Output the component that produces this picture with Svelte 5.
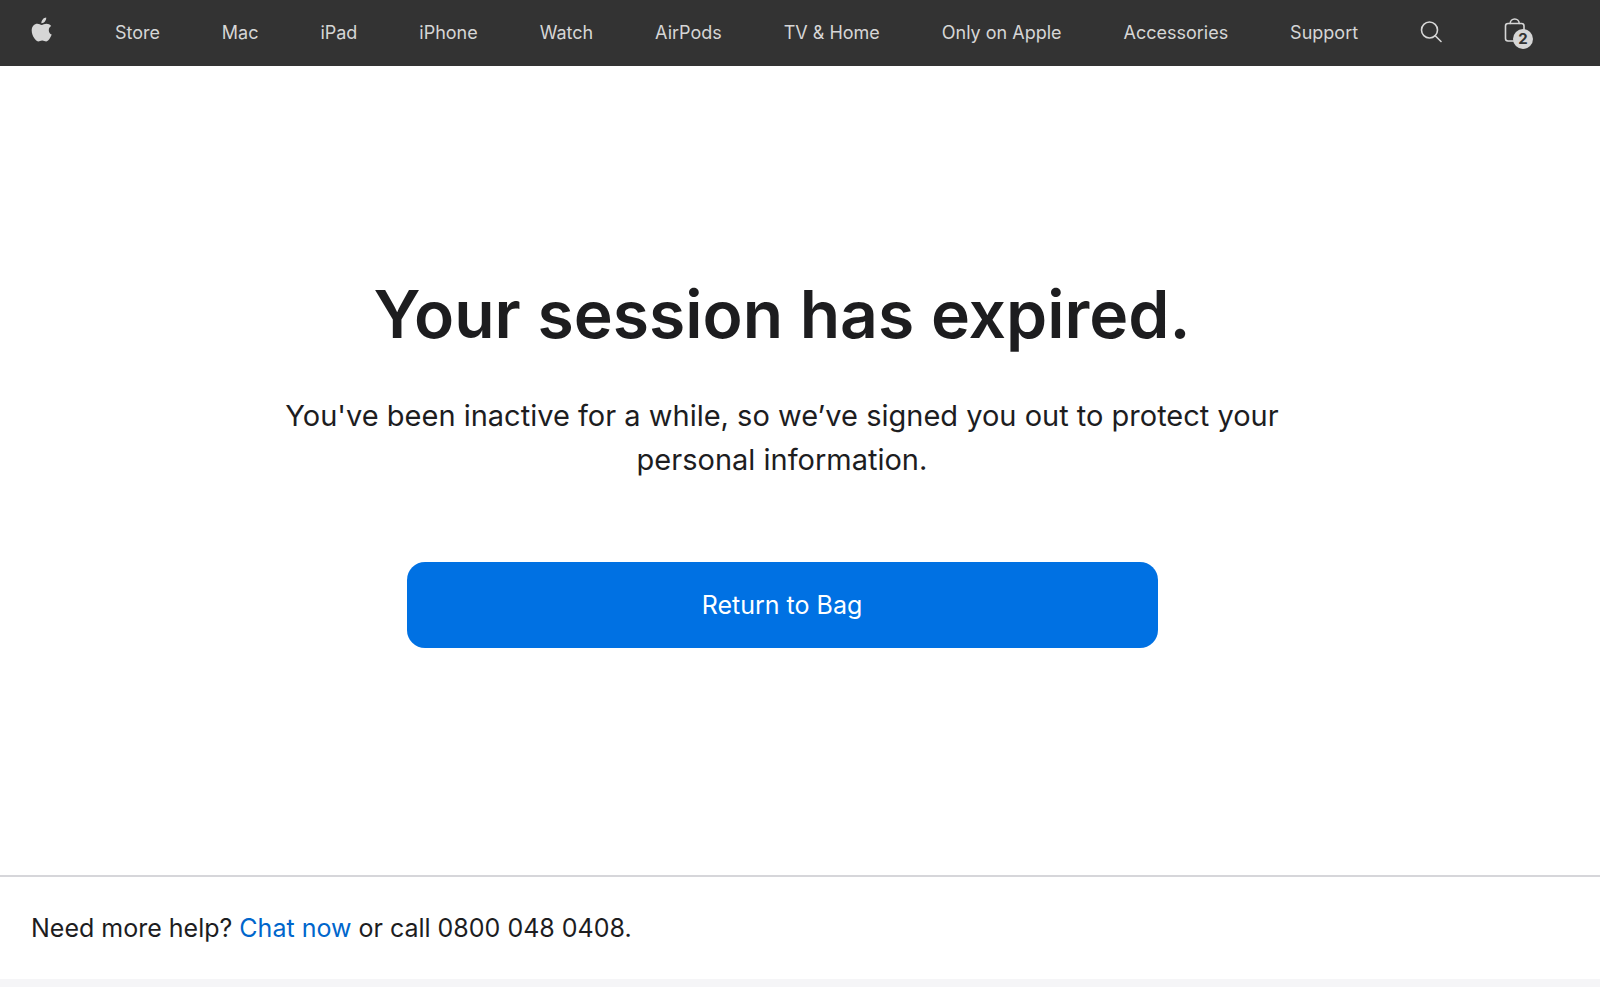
<script>
  const links = [
    "Store",
    "Mac",
    "iPad",
    "iPhone",
    "Watch",
    "AirPods",
    "TV & Home",
    "Only on Apple",
    "Accessories",
    "Support",
  ];

  let bagCount = 2;
</script>

<div class="page">
  <header>
    <nav aria-label="Global">
      <a class="icon" href="#apple" aria-label="Apple">
        <svg class="apple" width="22" height="26" viewBox="0 0 22 26">
          <path
            d="M15.2 0.6c.2 1.5-.4 2.9-1.3 3.9-.9 1.1-2.2 1.8-3.5 1.7-.2-1.4.5-2.8 1.3-3.8C12.6 1.4 14 .7 15.2.6z"
          />
          <path
            d="M20.2 9.1c-1.5.9-2.4 2.3-2.4 4.1 0 2.1 1.2 3.6 2.9 4.4-.4 1.2-1 2.4-1.7 3.5-1 1.500-2.100 3.300-3.800 3.300-1.600 0-2.100-1-4-1s-2.500 1-4 1c-1.700 0-2.900-1.600-3.900-3.100C1.700 19 .7 16.200.7 13.500.7 9.100 3.500 6.800 6.300 6.800c1.800 0 3.300 1.200 4.400 1.200 1.100 0 2.700-1.200 4.800-1.200 1.700 0 3.600.7 4.700 2.300z"
          />
        </svg>
      </a>
      {#each links as link}
        <a href="#{link}">{link}</a>
      {/each}
      <a class="icon" href="#search" aria-label="Search">
        <svg class="search" width="22" height="22" viewBox="0 0 22 22">
          <circle class="line" cx="9.5" cy="9" r="8" />
          <path class="line" d="M15.2 14.7L21 20.5" />
        </svg>
      </a>
      <a class="icon bag" href="#bag" aria-label="Shopping Bag">
        <svg width="29" height="32" viewBox="0 0 29 32">
          <rect class="line" x="1.5" y="6.5" width="18.5" height="17.5" rx="2.5" />
          <path class="line" d="M6.2 6.500c0-2.600 1.900-4.500 4.500-4.500s4.500 1.900 4.500 4.500" />
        </svg>
        <span class="badge">{bagCount}</span>
      </a>
    </nav>
  </header>

  <main>
    <h1>Your session has expired.</h1>
    <p>
      You've been inactive for a while, so we’ve signed you out to protect your
      personal information.
    </p>
    <button type="button">Return to Bag</button>
  </main>

  <footer>
    Need more help? <a href="#chat">Chat now</a> or call 0800 048 0408.
  </footer>
</div>

<style>
  :global(body) {
    margin: 0;
    background: #f5f5f7;
  }

  .page {
    display: flex;
    flex-direction: column;
    min-height: calc(100vh - 8px);
    background: #fff;
    color: #1d1d1f;
    font-family: Inter, "Liberation Sans", sans-serif;
  }

  header {
    padding: 0 67px 0 31px;
    background: #333;
  }

  nav {
    display: flex;
    align-items: center;
    justify-content: space-between;
    height: 66px;
  }

  nav a {
    color: #d6d6d6;
    font-size: 18px;
    line-height: 24px;
    white-space: nowrap;
    text-decoration: none;
  }

  .icon {
    display: flex;
  }

  .apple {
    margin-bottom: 7px;
    fill: #d6d6d6;
  }

  .search {
    margin-bottom: 2px;
  }

  .line {
    fill: none;
    stroke: #d6d6d6;
    stroke-width: 1.6;
    stroke-linecap: round;
  }

  .bag {
    position: relative;
  }

  .badge {
    position: absolute;
    right: 0;
    bottom: 0;
    width: 20px;
    height: 20px;
    border-radius: 50%;
    background: #d6d6d6;
    color: #333;
    font-size: 15px;
    font-weight: 700;
    line-height: 20px;
    text-align: center;
  }

  main {
    display: flex;
    flex: 1;
    flex-direction: column;
    align-items: center;
    padding: 204px 67px 0 31px;
    text-align: center;
  }

  h1 {
    margin: 0;
    font-size: 66px;
    font-weight: 600;
    line-height: 88px;
  }

  p {
    max-width: 1000px;
    margin: 36px 0 80px;
    font-size: 29px;
    line-height: 44px;
  }

  button {
    width: 50%;
    height: 86px;
    border: 0;
    border-radius: 18px;
    background: #0071e3;
    color: #fff;
    font: inherit;
    font-size: 25px;
  }

  footer {
    padding: 32px 31px;
    border-top: 2px solid #d6d6da;
    font-size: 25px;
    line-height: 38px;
  }

  footer a {
    color: #06c;
    text-decoration: none;
  }
</style>
